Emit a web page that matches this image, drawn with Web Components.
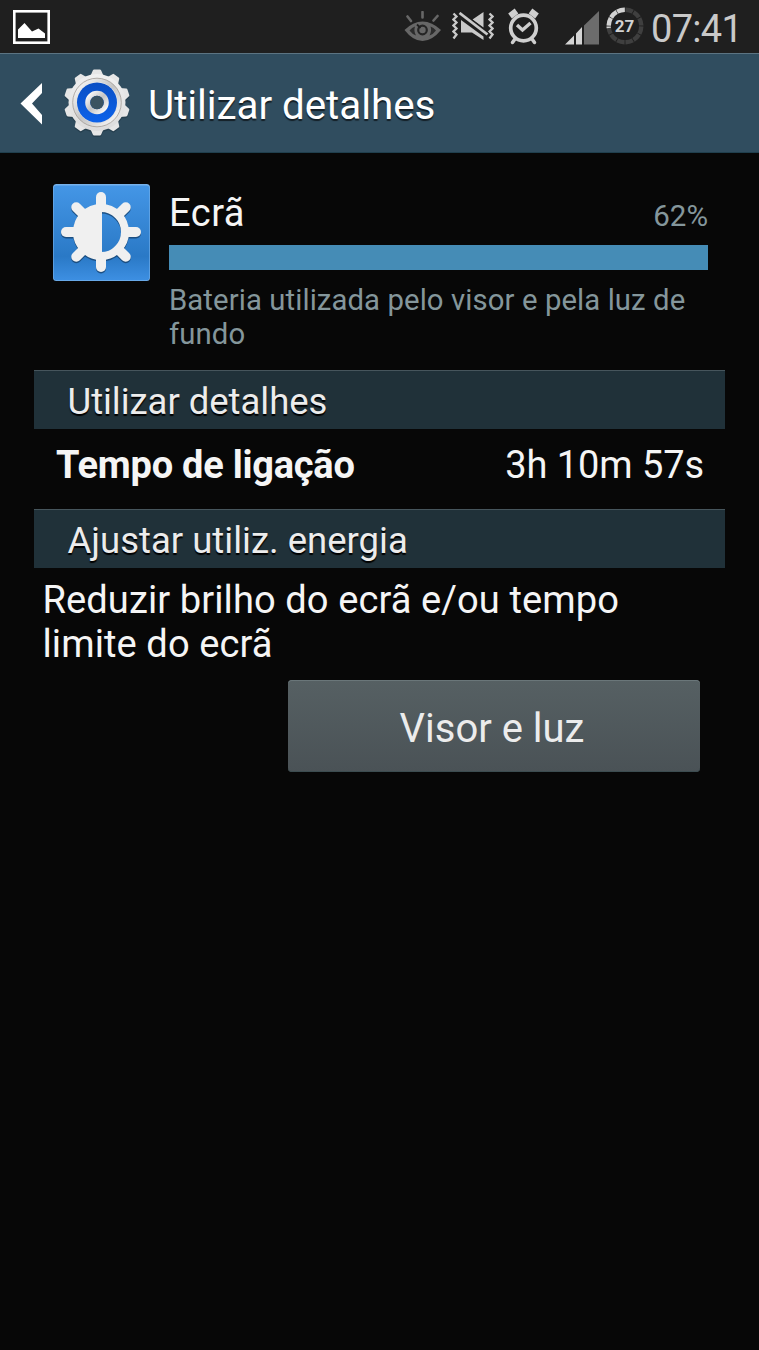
<!DOCTYPE html>
<html lang="pt">
<head>
<meta charset="utf-8">
<title>Utilizar detalhes</title>
<style>
  body {
    margin: 0;
    min-height: 1350px;
    background: #070707;
    color: #f5f5f5;
    font-family: Roboto, "Liberation Sans", sans-serif;
  }
  main {
    display: flex;
    flex-direction: column;
    padding: 31px 34px 0;
  }
</style>
</head>
<body>
<status-bar time="07:41" battery="27"></status-bar>
<action-bar>Utilizar detalhes</action-bar>
<main>
  <usage-item percent="62%">
    <span slot="name">Ecrã</span>
    Bateria utilizada pelo visor e pela luz de fundo
  </usage-item>
  <section-header style="letter-spacing: -0.04px">Utilizar detalhes</section-header>
  <detail-row value="3h 10m 57s">Tempo de ligação</detail-row>
  <section-header>Ajustar utiliz. energia</section-header>
  <power-tip>
    Reduzir brilho do ecrã e/ou tempo limite do ecrã
    <action-button slot="action">Visor e luz</action-button>
  </power-tip>
</main>

<script>
class StatusBar extends HTMLElement {
  constructor() {
    super();
    const shadow = this.attachShadow({ mode: 'open' });

    // ring of 12 segments, the charge runs counterclockwise from the top
    let ring = '';
    for (let i = 0; i < 12; i++) {
      ring += `<circle cx="19" cy="19" r="16.3" pathLength="360" stroke="#3f3f3f"
        stroke-dasharray="27 333" transform="rotate(${i * 30 - 88.5} 19 19)"/>`;
    }
    for (const [start, length] of [[-118.5, 28], [-148.5, 28], [-178.5, 28], [-187, 5.5]]) {
      ring += `<circle cx="19" cy="19" r="16.3" pathLength="360" stroke="#d2d2d2"
        stroke-dasharray="${length} ${360 - length}" transform="rotate(${start} 19 19)"/>`;
    }

    shadow.innerHTML = `
      <style>
        :host {
          display: flex;
          align-items: flex-start;
          box-sizing: border-box;
          height: 53px;
          padding: 7px 0 0 13px;
          background: #1f1f1f;
          color: #c9c9c9;
        }
        svg { display: block; flex: none; }
        .picture { margin: 3px auto 0 0; }
        .icons { display: flex; width: 355px; }
        .eye { margin: 4px 0 0; }
        .mute { margin: 5px 0 0 10px; }
        .alarm { margin: 1px 0 0 13px; }
        .signal { margin: 4px 0 0 24px; }
        .battery { margin-left: 6px; }
        .battery text { font: bold 17px Roboto, sans-serif; }
        .time {
          margin: 0 0 0 7px;
          font-size: 38px;
          line-height: 44px;
          letter-spacing: -0.7px;
          white-space: nowrap;
        }
      </style>
      <svg class="picture" width="37" height="34" viewBox="0 0 37 34">
        <rect x="1.3" y="1.3" width="34.4" height="31.4" fill="none" stroke="#fff" stroke-width="2.6"/>
        <path d="M5 28V19.500L11.500 13L19 21.500L25.500 18.500L32 23.500V28Z" fill="#fff"/>
      </svg>
      <div class="icons">
        <svg class="eye" width="38" height="31" viewBox="0 0 38 31" fill="none" stroke="#676767">
          <path d="M18.500 1V6.500M3.500 5.500L7 10M33.500 5L29.500 9.500" stroke-width="2.600" stroke-linecap="round"/>
          <path d="M0.500 19Q9 10.500 18.500 10.500T37 19Q28 30 18.500 30T0.500 19Z" fill="#676767" stroke="none"/>
          <path d="M5.500 19.500Q8 16.500 11 15.500Q9.500 20 12 24.500Q8 23 5.500 19.500ZM32 19.500Q29.500 16.500 26.500 15.500Q28 20 25.500 24.500Q29.500 23 32 19.500Z" fill="#2c2c2c" stroke="none"/>
          <circle cx="18.500" cy="19" r="4.300" stroke="#252525" stroke-width="2.200"/>
          <path d="M13 13.500L16.500 17" stroke="#1f1f1f" stroke-width="1.800"/>
        </svg>
        <svg class="mute" width="42" height="30" viewBox="0 0 42 30">
          <path d="M1.500 1.500L4.500 4.500L1.500 7.500L4.500 10.500L1.500 13.500L4.500 16.500L1.500 19.500L4.500 22.500L1.500 26.500M37.500 1.500L40.500 4.500L37.500 7.500L40.500 10.500L37.500 13.500L40.500 16.500L37.500 19.500L40.500 22.500L37.500 26.500"
            fill="none" stroke="#c9c9c9" stroke-width="2.300"/>
          <path d="M9 8L31.500 24.500V28L20 20.500H9ZM20.500 7.500L31.500 0V15.500Z" fill="#c9c9c9"/>
          <path d="M8 1L35.500 22.500" stroke="#1f1f1f" stroke-width="5"/>
          <path d="M7.500 1L35.500 22.500" stroke="#c9c9c9" stroke-width="2.800"/>
        </svg>
        <svg class="alarm" width="34" height="37" viewBox="0 0 34 37" fill="none" stroke="#cfcfcf">
          <circle cx="16.500" cy="20" r="12.800" stroke-width="3.700"/>
          <path d="M10 17L15.500 22L23.500 15" stroke-width="3.400"/>
          <path d="M3 8L9.500 3M30 8L23.500 3" stroke-width="6" stroke-linecap="butt"/>
          <path d="M8 31L5.500 34.500M25 31L27.500 34.500" stroke-width="3.500" stroke-linecap="round"/>
        </svg>
        <svg class="signal" width="35" height="34" viewBox="0 0 35 34">
          <path d="M0 33.500L9 24.500V33.500ZM11 22.500L17 16V33.500H11Z" fill="#d4d4d4"/>
          <path d="M19 14.500L34 0V33.500H19Z" fill="#6c6c6c"/>
        </svg>
        <svg class="battery" width="38" height="38" viewBox="0 0 38 38">
          <g fill="none" stroke-width="4.400">${ring}</g>
          <text x="18.500" y="25.300" text-anchor="middle" fill="#d2d2d2">${this.getAttribute('battery')}</text>
        </svg>
        <span class="time">${this.getAttribute('time')}</span>
      </div>
    `;
  }
}

class ActionBar extends HTMLElement {
  constructor() {
    super();
    const shadow = this.attachShadow({ mode: 'open' });

    let teeth = '';
    for (let i = 0; i < 10; i++) {
      teeth += `<path d="M-6.800 -26L-4.200 -32Q-3.800 -33 -2.800 -33H2.800Q3.800 -33 4.200 -32L6.800 -26Z" transform="rotate(${i * 36})"/>`;
    }

    shadow.innerHTML = `
      <style>
        :host {
          display: flex;
          align-items: center;
          box-sizing: border-box;
          height: 100px;
          padding-left: 20px;
          background: #304d5f;
          border-top: 1px solid #5c7482;
          border-bottom: 1px solid #203f4d;
        }
        svg { display: block; flex: none; }
        svg.back { margin-top: 1px; }
        .gear { margin: 0 0 0 20px; }
        h1 {
          margin: 6px 0 0 17px;
          font-size: 40.4px;
          font-weight: 400;
          line-height: 48px;
          letter-spacing: -0.06px;
          color: #fff;
          text-shadow: 0 2px 1px rgba(0, 0, 0, 0.6);
        }
      </style>
      <svg class="back" width="23" height="44" viewBox="0 0 23 44">
        <path d="M22 1V11L12 21.500L22 33V42.500L0.500 21.500Z" fill="#fff"/>
      </svg>
      <svg class="gear" width="68" height="70" viewBox="-34 -34.500 68 70">
        <defs>
          <linearGradient id="metal" x1="0" y1="0" x2="0" y2="1">
            <stop offset="0" stop-color="#f0f0f0"/>
            <stop offset="1" stop-color="#dcdcdc"/>
          </linearGradient>
          <linearGradient id="rim" x1="0" y1="0" x2="1" y2="1">
            <stop offset="0" stop-color="#fff"/>
            <stop offset="0.500" stop-color="#c4c4c4"/>
            <stop offset="1" stop-color="#fff"/>
          </linearGradient>
          <linearGradient id="blue" x1="0" y1="0" x2="0" y2="1">
            <stop offset="0" stop-color="#0a4fc4"/>
            <stop offset="1" stop-color="#0c62ea"/>
          </linearGradient>
        </defs>
        <g fill="#1d323f" opacity="0.500" transform="translate(0 1.500)">${teeth}<circle r="28.500"/></g>
        <g fill="#e6e6e6">${teeth}</g>
        <circle r="28.500" fill="url(#metal)"/>
        <circle r="22.500" fill="none" stroke="url(#rim)" stroke-width="4"/>
        <circle r="24.300" fill="none" stroke="#a29c96" stroke-width="0.800"/>
        <circle r="20" fill="url(#blue)"/>
        <circle r="9.300" fill="none" stroke="url(#rim)" stroke-width="5"/>
        <circle r="6.800" fill="#3b5361"/>
      </svg>
      <h1><slot></slot></h1>
    `;
  }
}

class UsageItem extends HTMLElement {
  constructor() {
    super();
    const shadow = this.attachShadow({ mode: 'open' });

    let rays = '';
    for (let i = 0; i < 8; i++) {
      rays += `<path d="M0 -25V-35" transform="rotate(${i * 45})"/>`;
    }
    const sun = `
      <g fill="none" stroke-width="10" stroke-linecap="round">${rays}</g>
      <circle r="24" fill="none" stroke-width="8"/>
      <path d="M1 -24V24A24 24 0 0 1 1 -24Z" stroke="none"/>
    `;

    shadow.innerHTML = `
      <style>
        :host {
          display: flex;
          gap: 19px;
          box-sizing: border-box;
          height: 186px;
          padding: 0 17px 0 19px;
        }
        svg { display: block; flex: none; }
        .info { flex: 1; padding-top: 7px; }
        .top {
          display: flex;
          justify-content: space-between;
          align-items: baseline;
          height: 54px;
          line-height: 44px;
        }
        .name { font-size: 38px; letter-spacing: 0.5px; }
        .percent { font-size: 29.5px; color: #84969b; }
        .bar { height: 25px; background: #458cb6; }
        .text {
          margin: 13px 0 0;
          font-size: 29.3px;
          line-height: 34px;
          letter-spacing: 0.09px;
          color: #84969b;
        }
      </style>
      <svg width="97" height="97" viewBox="0 0 97 97">
        <defs>
          <linearGradient id="tile" x1="0" y1="0" x2="0" y2="1">
            <stop offset="0" stop-color="#4496e6"/>
            <stop offset="0.750" stop-color="#2a79c6"/>
            <stop offset="1" stop-color="#3d8fe2"/>
          </linearGradient>
        </defs>
        <rect width="97" height="97" rx="3.500" fill="#76b1ea"/>
        <rect x="0.600" y="1.500" width="95.800" height="94.700" rx="3" fill="url(#tile)"/>
        <g transform="translate(48 49.500)" fill="#17436f" stroke="#17436f" opacity="0.800">${sun}</g>
        <g transform="translate(48 48)" fill="#f0f0f0" stroke="#f0f0f0">${sun}</g>
      </svg>
      <div class="info">
        <div class="top">
          <span class="name"><slot name="name"></slot></span>
          <span class="percent">${this.getAttribute('percent')}</span>
        </div>
        <div class="bar"></div>
        <p class="text"><slot></slot></p>
      </div>
    `;
  }
}

class SectionHeader extends HTMLElement {
  constructor() {
    super();
    this.attachShadow({ mode: 'open' }).innerHTML = `
      <style>
        :host {
          display: block;
          box-sizing: border-box;
          height: 59px;
          padding: 2px 0 0 33.5px;
          background: #203139;
          border-top: 1px solid #46555c;
        }
        h2 {
          margin: 0;
          font-size: 36.5px;
          font-weight: 400;
          line-height: 57px;
          color: #ececec;
          text-shadow: 0 2px 1px #000;
        }
      </style>
      <h2><slot></slot></h2>
    `;
  }
}

class DetailRow extends HTMLElement {
  constructor() {
    super();
    this.attachShadow({ mode: 'open' }).innerHTML = `
      <style>
        :host {
          display: flex;
          justify-content: space-between;
          box-sizing: border-box;
          height: 80px;
          padding: 14px 21px 0 22px;
          font-size: 38px;
          line-height: 44px;
        }
        .label { font-weight: 700; letter-spacing: -0.25px; }
        .value { letter-spacing: -0.08px; }
      </style>
      <span class="label"><slot></slot></span>
      <span class="value">${this.getAttribute('value')}</span>
    `;
  }
}

class PowerTip extends HTMLElement {
  constructor() {
    super();
    this.attachShadow({ mode: 'open' }).innerHTML = `
      <style>
        :host {
          display: flex;
          flex-direction: column;
          gap: 14px;
          padding: 10px 25px 0 8.5px;
        }
        p {
          margin: 0;
          max-width: 620px;
          font-size: 38.1px;
          line-height: 44px;
          letter-spacing: 0.08px;
        }
        ::slotted([slot="action"]) { align-self: flex-end; }
      </style>
      <p><slot></slot></p>
      <slot name="action"></slot>
    `;
  }
}

class ActionButton extends HTMLElement {
  constructor() {
    super();
    this.attachShadow({ mode: 'open' }).innerHTML = `
      <style>
        :host { display: block; width: 412px; }
        button {
          display: block;
          width: 100%;
          height: 92px;
          padding: 4px 4px 0 0;
          border: 0;
          border-radius: 4px;
          background: linear-gradient(#566063, #4a5256);
          box-shadow: inset 0 1px #6a7679, inset 0 -1px #3c4c50;
          color: #ececec;
          font-family: inherit;
          font-size: 40px;
        }
      </style>
      <button><slot></slot></button>
    `;
  }
}

customElements.define('status-bar', StatusBar);
customElements.define('action-bar', ActionBar);
customElements.define('usage-item', UsageItem);
customElements.define('section-header', SectionHeader);
customElements.define('detail-row', DetailRow);
customElements.define('power-tip', PowerTip);
customElements.define('action-button', ActionButton);
</script>
</body>
</html>
